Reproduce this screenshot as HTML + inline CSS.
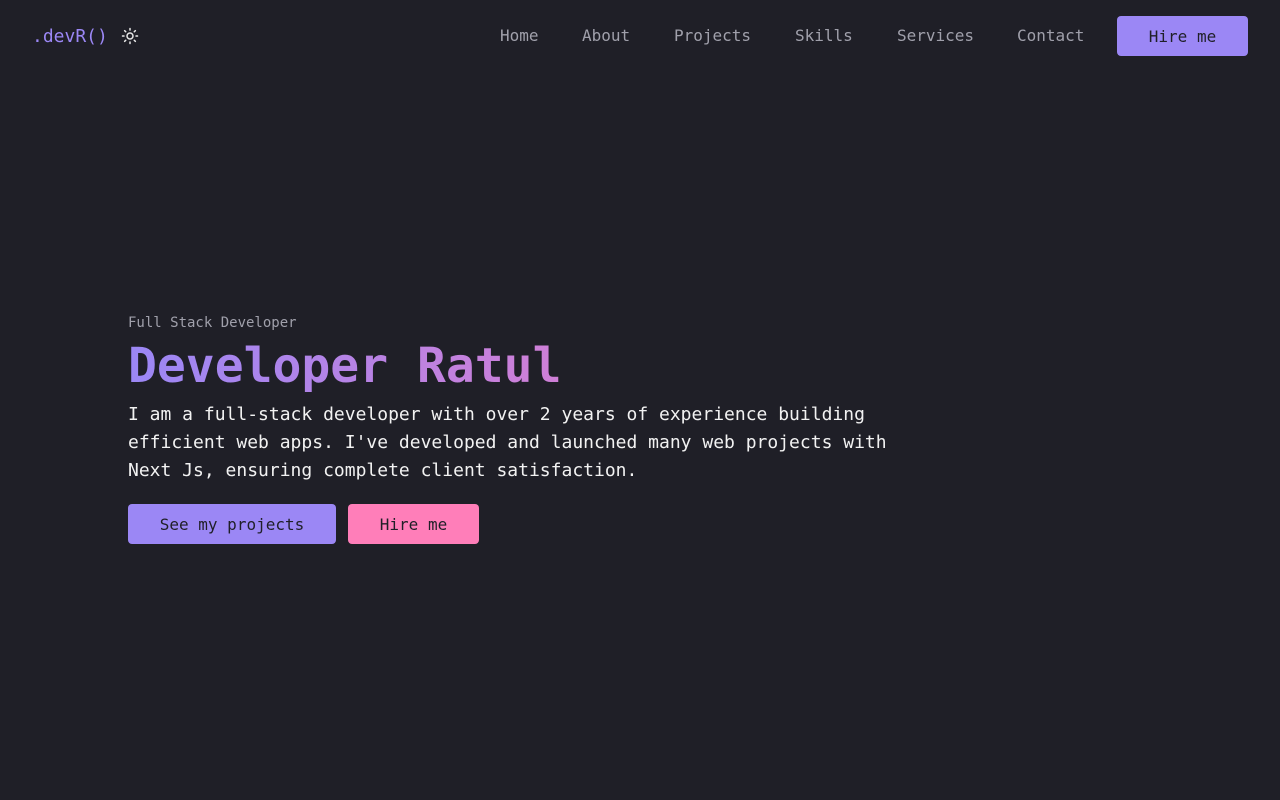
<!DOCTYPE html>
<html><head><meta charset="utf-8"><style>
*{margin:0;padding:0;box-sizing:border-box}
body{width:1280px;height:800px;background:#1f1f27;font-family:"DejaVu Sans Mono","Liberation Mono",monospace;color:#fff;position:relative;overflow:hidden}
.logo{position:absolute;left:32px;top:25px;font-size:18px;line-height:24px;color:#9b87f5;letter-spacing:0}
.sun{position:absolute;left:121px;top:27px}
.nav{position:absolute;top:26px;font-size:16px;line-height:20px;color:#a0a0ab;letter-spacing:0}
.btn{position:absolute;border-radius:4px;font-size:16px;color:#1f1f27;text-align:center;font-weight:500}
.sub{position:absolute;left:128px;top:315px;font-size:14px;color:#a0a0ab;letter-spacing:0}
h1{position:absolute;left:128px;top:336px;font-size:48px;line-height:60px;font-weight:bold;letter-spacing:0;background:linear-gradient(90deg,#9b87f5,#d07fd6);-webkit-background-clip:text;background-clip:text;color:transparent;width:440px}
p{position:absolute;left:128px;top:401px;font-size:18px;line-height:28px;color:#f2f2f2;width:800px;letter-spacing:0}
.b{line-height:41px}
</style></head><body>
<div class="logo">.devR()</div>
<svg class="sun" width="18" height="18" viewBox="0 0 24 24" fill="none" stroke="#e8e8e8" stroke-width="2" stroke-linecap="round"><circle cx="12" cy="12" r="4"/><path d="M12 2v2M12 20v2M4.9 4.9l1.4 1.4M17.7 17.7l1.4 1.4M2 12h2M20 12h2M4.9 19.1l1.4-1.4M17.7 6.3l1.4-1.4"/></svg>
<div class="nav" style="left:500px">Home</div>
<div class="nav" style="left:582px">About</div>
<div class="nav" style="left:674px">Projects</div>
<div class="nav" style="left:795px">Skills</div>
<div class="nav" style="left:897px">Services</div>
<div class="nav" style="left:1017px">Contact</div>
<div class="btn b" style="left:1117px;top:16px;width:131px;height:40px;background:#9b87f5">Hire me</div>
<div class="sub">Full Stack Developer</div>
<h1>Developer Ratul</h1>
<p>I am a full-stack developer with over 2 years of experience building efficient web apps. I've developed and launched many web projects with Next Js, ensuring complete client satisfaction.</p>
<div class="btn b" style="left:128px;top:504px;width:208px;height:40px;background:#9b87f5">See my projects</div>
<div class="btn b" style="left:348px;top:504px;width:131px;height:40px;background:#ff7eb9">Hire me</div>
</body></html>
